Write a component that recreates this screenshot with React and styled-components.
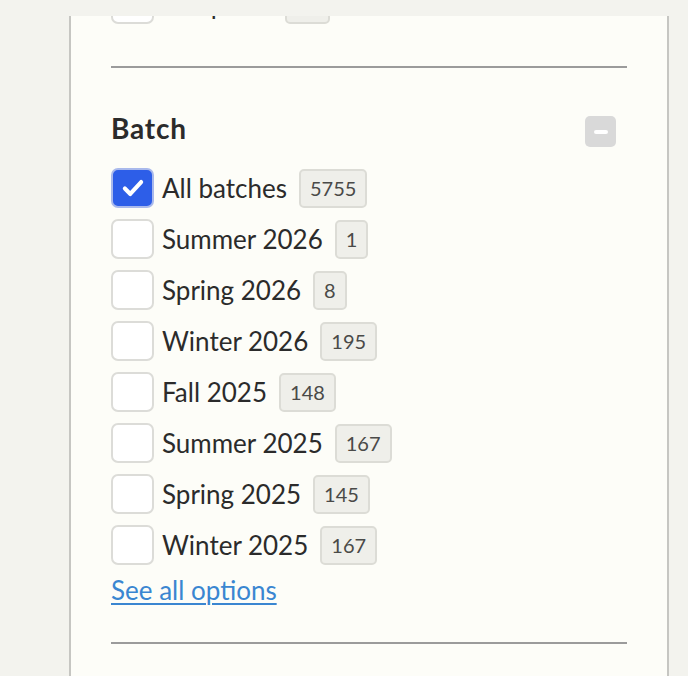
import { useLayoutEffect, useRef } from 'react'
import styled, { createGlobalStyle } from 'styled-components'

const GlobalStyle = createGlobalStyle`
  html, body {
    margin: 0;
    padding: 0;
    background: #f3f3ee;
  }
  * {
    box-sizing: border-box;
  }
`

const batches = [
  { label: 'All batches', count: 5755, checked: true },
  { label: 'Summer 2026', count: 1 },
  { label: 'Spring 2026', count: 8 },
  { label: 'Winter 2026', count: 195 },
  { label: 'Fall 2025', count: 148 },
  { label: 'Summer 2025', count: 167 },
  { label: 'Spring 2025', count: 145 },
  { label: 'Winter 2025', count: 167 },
]

const CheckIcon = () => (
  <svg width="26" height="26" viewBox="0 0 24 24" fill="none">
    <path
      d="M4.5 12.5l5 5 10-11"
      stroke="#fff"
      strokeWidth="3.8"
      strokeLinecap="round"
      strokeLinejoin="round"
    />
  </svg>
)

const Option = ({ label, count, checked }) => (
  <OptionRow>
    <Box $checked={checked}>{checked && <CheckIcon />}</Box>
    <Label>{label}</Label>
    <Count>{count}</Count>
  </OptionRow>
)

const App = () => {
  const panelRef = useRef(null)

  // the filter list is scrolled a little, so the previous option peeks in at the top
  useLayoutEffect(() => {
    if (panelRef.current) panelRef.current.scrollTop = 32
  }, [])

  return (
    <Page>
      <GlobalStyle />
      <TopGap />
      <Panel ref={panelRef}>
        <Option label="Nonprofit" count={68} />
        <Divider />
        <Section>
          <SectionHead>
            <Heading>Batch</Heading>
            <Collapse aria-label="Collapse">
              <span />
            </Collapse>
          </SectionHead>
          <OptionList>
            {batches.map((b) => (
              <Option key={b.label} {...b} />
            ))}
          </OptionList>
          <SeeAll href="#">See all options</SeeAll>
        </Section>
        <Divider $top={35} />
      </Panel>
    </Page>
  )
}

export default App

const Page = styled.div`
  height: 676px;
  display: flex;
  flex-direction: column;
  background: #f3f3ee;
  font-family: Lato, 'Liberation Sans', sans-serif;
  color: #2b2b2b;
  overflow: hidden;
`

const TopGap = styled.div`
  height: 16px;
  flex-shrink: 0;
`

const Panel = styled.div`
  flex: 1;
  min-height: 0;
  width: 600px;
  margin-left: 69px;
  padding: 0 40px 120px;
  background: #fdfdf8;
  border-left: 2px solid #c6c6c2;
  border-right: 2px solid #c6c6c2;
  overflow: hidden;
`

const OptionRow = styled.label`
  display: flex;
  align-items: center;
  height: 40px;
  cursor: pointer;
`

const Box = styled.span`
  width: 43px;
  height: 40px;
  flex-shrink: 0;
  display: flex;
  align-items: center;
  justify-content: center;
  border-radius: 7px;
  border: 2px solid ${(p) => (p.$checked ? '#a9b9ec' : '#dcdcd8')};
  background: ${(p) => (p.$checked ? '#2d5ee8' : '#ffffff')};
`

const Label = styled.span`
  margin-left: 8px;
  font-size: 26px;
  line-height: 1;
  white-space: nowrap;
`

const Count = styled.span`
  margin-left: 12px;
  height: 39px;
  padding: 0 9px;
  display: flex;
  align-items: center;
  border-radius: 5px;
  border: 2px solid #dcdcd6;
  background: #efefea;
  color: #4a4a48;
  font-size: 20px;
`

const Divider = styled.hr`
  margin: ${(p) => p.$top ?? 42}px 0 0 0;
  border: none;
  height: 2px;
  background: #9b9b9b;
`

const Section = styled.div`
  padding-top: 48px;
  display: flex;
  flex-direction: column;
`

const SectionHead = styled.div`
  display: flex;
  align-items: flex-start;
  justify-content: space-between;
  height: 31px;
  padding-right: 11px;
`

const Heading = styled.h3`
  margin: -4px 0 0 0;
  font-size: 28px;
  font-weight: 700;
  line-height: 32px;
  letter-spacing: 0.8px;
`

const Collapse = styled.button`
  width: 31px;
  height: 31px;
  padding: 0;
  border: none;
  border-radius: 5px;
  background: #d9d9d9;
  display: flex;
  align-items: center;
  justify-content: center;
  cursor: pointer;

  span {
    width: 14px;
    height: 4px;
    border-radius: 2px;
    background: #fff;
  }
`

const OptionList = styled.div`
  margin-top: 21px;
  display: flex;
  flex-direction: column;
  gap: 11px;
`

const SeeAll = styled.a`
  margin-top: 8px;
  align-self: flex-start;
  font-size: 26px;
  line-height: 34px;
  color: #3a86d1;
  text-decoration: underline;
  text-underline-offset: 3px;
  text-decoration-thickness: 2px;
`
